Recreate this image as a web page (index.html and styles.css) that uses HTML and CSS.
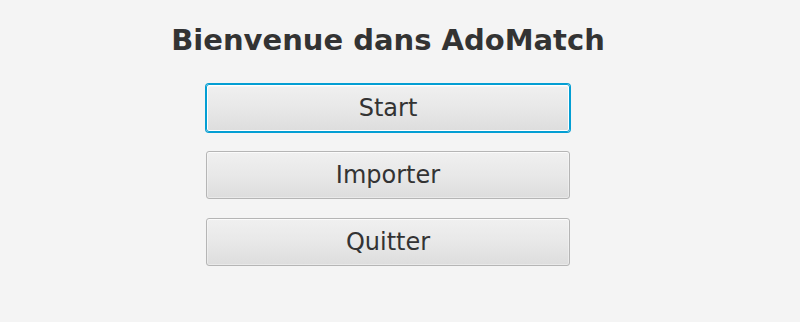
FILE: index.html
```html
<!DOCTYPE html>
<html lang="fr">
<head>
<meta charset="utf-8">
<title>AdoMatch</title>
<link rel="stylesheet" href="styles.css">
</head>
<body>
<main class="menu">
  <h1 class="title">Bienvenue dans AdoMatch</h1>
  <div class="buttons">
    <button class="btn btn-focused">Start</button>
    <button class="btn">Importer</button>
    <button class="btn">Quitter</button>
  </div>
</main>
</body>
</html>
```
FILE: styles.css
```css
html, body {
  margin: 0;
  padding: 0;
  background: #f4f4f4;
  width: 800px;
  height: 322px;
  overflow: hidden;
}
.menu {
  width: 776px;
  display: flex;
  flex-direction: column;
  align-items: center;
  font-family: "DejaVu Sans", sans-serif;
  color: #333333;
}
.title {
  margin: 22px 0 0 0;
  font-size: 29px;
  font-weight: bold;
  line-height: 36px;
  color: #333333;
}
.buttons {
  margin-top: 26px;
  display: flex;
  flex-direction: column;
  gap: 19px;
}
.btn {
  width: 364px;
  height: 48px;
  box-sizing: border-box;
  border: 1px solid #b5b5b5;
  border-radius: 3px;
  background: linear-gradient(to bottom, #f0f0f0 0%, #e8e8e8 50%, #dddddd 100%);
  box-shadow: inset 0 1px 0 #fbfbfb, inset 0 0 0 1px rgba(255,255,255,0.35);
  font-family: "DejaVu Sans", sans-serif;
  font-size: 24px;
  color: #333333;
  padding: 0;
}
.btn-focused {
  border: 1px solid #039ed3;
  box-shadow: 0 0 0 1px #039ed3, inset 0 0 0 1px #ffffff, inset 0 2px 0 #f6f6f6;
}
```
